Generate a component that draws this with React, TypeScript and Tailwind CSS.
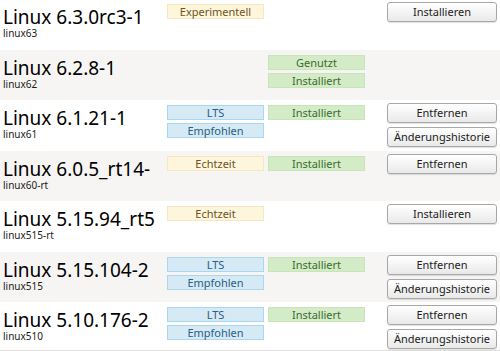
import React from 'react';

type Badge = { text: string; kind: 'exp' | 'lts' | 'ok' | 'rt' };

type Kernel = {
  title: string;
  pkg: string;
  col1: Badge[];
  col2: Badge[];
  buttons: string[];
  h: string;
};

const kernels: Kernel[] = [
  {
    title: 'Linux 6.3.0rc3-1',
    pkg: 'linux63',
    col1: [{ text: 'Experimentell', kind: 'exp' }],
    col2: [],
    buttons: ['Installieren'],
    h: 'h-[51px]',
  },
  {
    title: 'Linux 6.2.8-1',
    pkg: 'linux62',
    col1: [],
    col2: [
      { text: 'Genutzt', kind: 'ok' },
      { text: 'Installiert', kind: 'ok' },
    ],
    buttons: [],
    h: 'h-[50px]',
  },
  {
    title: 'Linux 6.1.21-1',
    pkg: 'linux61',
    col1: [
      { text: 'LTS', kind: 'lts' },
      { text: 'Empfohlen', kind: 'lts' },
    ],
    col2: [{ text: 'Installiert', kind: 'ok' }],
    buttons: ['Entfernen', 'Änderungshistorie'],
    h: 'h-[51px]',
  },
  {
    title: 'Linux 6.0.5_rt14-',
    pkg: 'linux60-rt',
    col1: [{ text: 'Echtzeit', kind: 'rt' }],
    col2: [{ text: 'Installiert', kind: 'ok' }],
    buttons: ['Entfernen'],
    h: 'h-[50px]',
  },
  {
    title: 'Linux 5.15.94_rt5',
    pkg: 'linux515-rt',
    col1: [{ text: 'Echtzeit', kind: 'rt' }],
    col2: [],
    buttons: ['Installieren'],
    h: 'h-[51px]',
  },
  {
    title: 'Linux 5.15.104-2',
    pkg: 'linux515',
    col1: [
      { text: 'LTS', kind: 'lts' },
      { text: 'Empfohlen', kind: 'lts' },
    ],
    col2: [{ text: 'Installiert', kind: 'ok' }],
    buttons: ['Entfernen', 'Änderungshistorie'],
    h: 'h-[50px]',
  },
  {
    title: 'Linux 5.10.176-2',
    pkg: 'linux510',
    col1: [
      { text: 'LTS', kind: 'lts' },
      { text: 'Empfohlen', kind: 'lts' },
    ],
    col2: [{ text: 'Installiert', kind: 'ok' }],
    buttons: ['Entfernen', 'Änderungshistorie'],
    h: 'h-[48px]',
  },
];

const badgeStyle: Record<Badge['kind'], string> = {
  exp: 'bg-[#fdf6dc] border-[#f6e7bc] text-[#6f5420]',
  rt: 'bg-[#fdf6dc] border-[#f6e7bc] text-[#6f5420]',
  lts: 'bg-[#d6eaf6] border-[#a9d6f0] text-[#2b5c82]',
  ok: 'bg-[#d4ebc8] border-[#c8e4ba] text-[#3a6b2b]',
};

const BadgeBox = ({ badge }: { badge: Badge }) => (
  <div
    className={`h-[15px] w-[97px] border flex items-center justify-center text-[11px] leading-[13px] ${badgeStyle[badge.kind]}`}
  >
    {badge.text}
  </div>
);

const Button = ({ label }: { label: string }) => (
  <button className="h-[20px] w-[110px] rounded-[3px] border border-[#a8a8a8] bg-gradient-to-b from-[#ffffff] to-[#e9e9e9] shadow-[0_1px_1px_rgba(0,0,0,0.12)] text-[11px] leading-[16px] text-[#1c1c1c] flex items-center justify-center">
    {label}
  </button>
);

export default function App() {
  return (
    <div
      className="w-[500px] h-[351px] overflow-hidden bg-white"
      style={{ fontFamily: '"Noto Sans", "Open Sans", sans-serif' }}
    >
      <div className="-mt-px border-b border-[#e2e0dd]">
        {kernels.map((k, i) => (
          <div
            key={k.pkg}
            className={`flex ${k.h} ${i % 2 === 1 ? 'bg-[#f6f5f3]' : 'bg-white'}`}
          >
            <div className="w-[167px] pl-[3px] pt-[7px] overflow-hidden whitespace-nowrap">
              <div className="text-[19px] leading-[22px] text-black">{k.title}</div>
              <div className="text-[10px] leading-[10px] text-[#1a1a1a]">{k.pkg}</div>
            </div>
            <div className="w-[97px] pt-[5px] flex flex-col gap-[3px]">
              {k.col1.map((b) => (
                <BadgeBox key={b.text} badge={b} />
              ))}
            </div>
            <div className="ml-[4px] w-[97px] pt-[5px] flex flex-col gap-[3px]">
              {k.col2.map((b) => (
                <BadgeBox key={b.text} badge={b} />
              ))}
            </div>
            <div className="ml-[22px] pt-[3px] flex flex-col gap-[4px]">
              {k.buttons.map((b) => (
                <Button key={b} label={b} />
              ))}
            </div>
          </div>
        ))}
      </div>
    </div>
  );
}
